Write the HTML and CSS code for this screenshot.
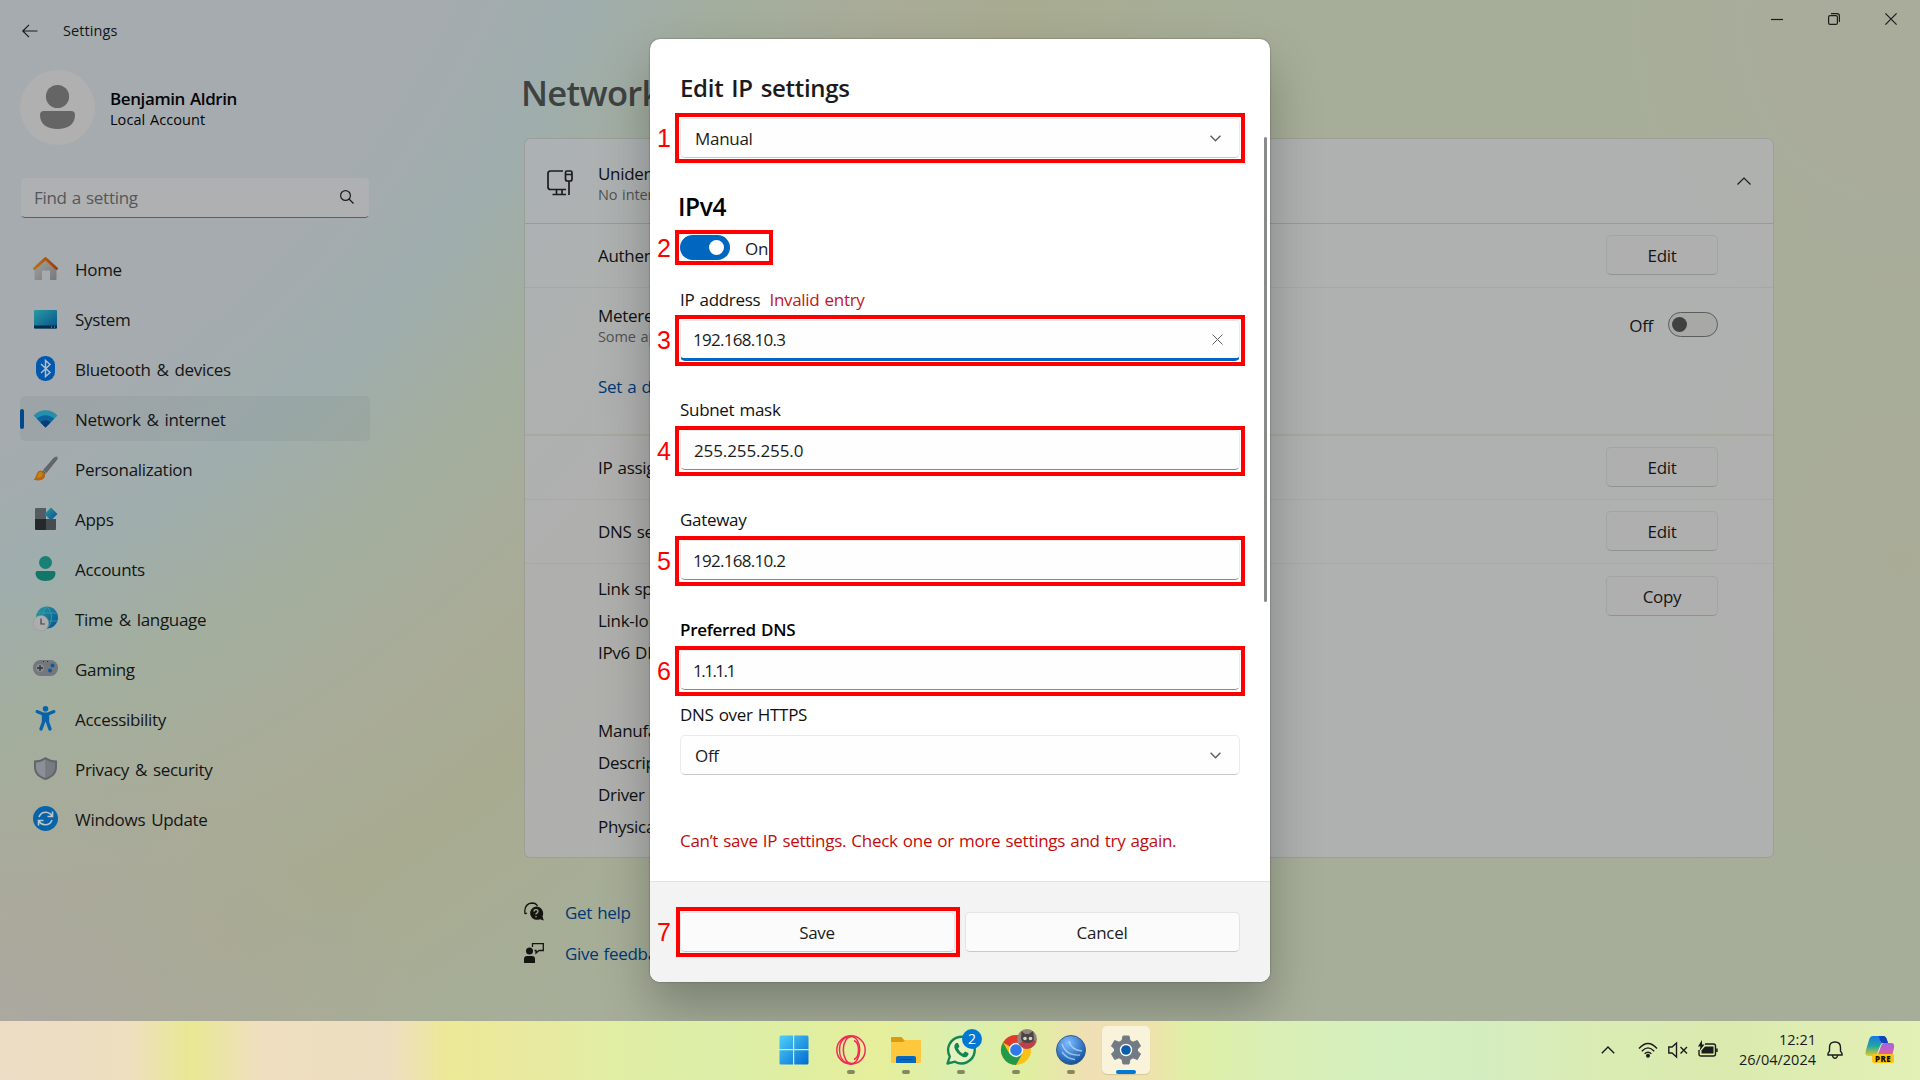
FILE: index.html
```html
<!DOCTYPE html>
<html lang="en">
<head>
<meta charset="utf-8">
<title>Settings</title>
<link rel="stylesheet" href="styles.css">
</head>
<body>
<div class="desktop">
  <div class="window">
    <header class="titlebar">
      <svg class="back" viewBox="0 0 16 14"><path d="M15.5 7H1M7 .8L.8 7 7 13.200"/></svg>
      <span class="app-name">Settings</span>
      <div class="controls">
        <svg viewBox="0 0 12 12"><path d="M0 6.500H12"/></svg>
        <svg viewBox="0 0 12 12"><rect x=".6" y="2.600" width="8.800" height="8.800" rx="1.500"/><path d="M3 .6H9Q11.400.6 11.400 3V9"/></svg>
        <svg viewBox="0 0 12 12"><path d="M.4.4L11.600 11.600M11.600.4L.4 11.600"/></svg>
      </div>
    </header>
    <div class="columns">
      <aside class="sidebar">
        <div class="account">
          <svg class="avatar" viewBox="0 0 75 75"><circle cx="37.500" cy="37.500" r="37.500" fill="#b0b0b0"/><circle cx="37.500" cy="26.500" r="11.600" fill="#656565"/><path d="M24 41H51Q55 41 55 45C55 54 48 59 37.500 59S20 54 20 45Q20 41 24 41Z" fill="#656565"/></svg>
          <div class="who"><span class="name">Benjamin Aldrin</span><span class="kind">Local Account</span></div>
        </div>
        <div class="search"><span>Find a setting</span><svg viewBox="0 0 14 14"><circle cx="5.500" cy="5.500" r="4.900"/><path d="M9 9L13.500 13.500"/></svg></div>
        <nav class="nav">
          <div class="item"><svg viewBox="0 0 25 25"><defs><linearGradient id="roof"><stop stop-color="#b77412"/><stop offset="1" stop-color="#a13b0b"/></linearGradient><linearGradient id="wall" x2="1" y2="1"><stop stop-color="#a2a2a2"/><stop offset="1" stop-color="#787878"/></linearGradient></defs><path d="M1.500 11L12.500 2 23.500 11V23Q23.500 24 22.500 24H17V14.500H9V24H2.500Q1.500 24 1.500 23Z" fill="url(#wall)"/><path d="M1.500 12.500L12.500 2.500 23.500 12.500" fill="none" stroke="url(#roof)" stroke-width="3" stroke-linecap="round" stroke-linejoin="round"/></svg><span>Home</span></div>
          <div class="item"><svg viewBox="0 0 25 25"><defs><linearGradient id="screen" x2="1" y2="1"><stop stop-color="#299ba1"/><stop offset="1" stop-color="#07508d"/></linearGradient></defs><rect x="1" y="4" width="23" height="18.500" rx="1" fill="url(#screen)"/><path d="M1 19.500H24V21.500Q24 22.500 23 22.500H2Q1 22.500 1 21.500Z" fill="#062b49"/><path d="M18 21H19M21 21H22" stroke="#8ba4b5"/></svg><span>System</span></div>
          <div class="item"><svg viewBox="0 0 25 25"><rect x="3" y="0" width="19" height="25" rx="9" fill="#0058af"/><path d="M8 8L17 16.500 12.500 20.500V4.500L17 8.500 8 17" fill="none" stroke="#b4bdc6" stroke-width="1.500"/></svg><span>Bluetooth &amp; devices</span></div>
          <div class="item selected"><svg viewBox="0 0 25 25"><path d="M.5 9.500C7 2.500 18 2.500 24.500 9.500L12.500 21.500Z" fill="#268fae"/><path d="M3.800 12.800C9 8 16 8 21.200 12.800L12.500 21.500Z" fill="#0b649e"/><path d="M7.500 16.500C10.500 13.500 14.500 13.500 17.500 16.500L12.500 21.500Z" fill="#0b3a71"/></svg><span>Network &amp; internet</span></div>
          <div class="item"><svg viewBox="0 0 25 25"><path d="M10 14L20.500 2Q23-.5 24.500 1 25.500 2.500 23.500 4.500L13.500 17Z" fill="#62666b"/><path d="M10 14.500L13 17.500 12 18 9 15.500Z" fill="#454b50"/><path d="M8 14.500Q12.500 16 12 20C11.500 24 6 25.500.5 23.500 4 22 2.500 14.500 8 14.500Z" fill="#b8640d"/><path d="M7 16Q10 16 9.500 19T4 22Q5 16 7 16Z" fill="#bd851c"/></svg><span>Personalization</span></div>
          <div class="item"><svg viewBox="0 0 25 25"><path d="M3 2H13V13H2V3Q2 2 3 2Z" fill="#565b61"/><path d="M2 13H13V24H3Q2 24 2 23Z" fill="#25292c"/><path d="M13 13H23V23Q23 24 22 24H13Z" fill="#464b50"/><path d="M18 1.500L24.500 8 18 14.500 11.500 8Z" fill="url(#screen)"/></svg><span>Apps</span></div>
          <div class="item"><svg viewBox="0 0 25 25"><circle cx="12.500" cy="6.500" r="6.500" fill="#168174"/><path d="M4.500 15H20.500Q22.500 15 22.500 17C22.500 22 18.500 25 12.500 25S2.500 22 2.500 17Q2.500 15 4.500 15Z" fill="#127768"/></svg><span>Accounts</span></div>
          <div class="item"><svg viewBox="0 0 25 25"><circle cx="14" cy="11.500" r="11" fill="url(#screen)"/><path d="M14 .5C8 7 8 16 14 22.500M14 .5C20 7 20 16 14 22.500M4 7H24M4 15H24" fill="none" stroke="#37a0b0" stroke-width=".8"/><circle cx="8" cy="17.200" r="7.700" fill="#acadae" stroke="#929699" stroke-width=".5"/><path d="M8 12.500V18H12" fill="none" stroke="#404448" stroke-width="1.200"/></svg><span>Time &amp; language</span></div>
          <div class="item"><svg viewBox="0 0 25 25"><rect x="0" y="4" width="25" height="16" rx="7.500" fill="#74787e"/><circle cx="7" cy="12" r="4" fill="#898d91"/><path d="M4 12H10M7 9V15" stroke="#2e3337" stroke-width="1.300"/><circle cx="19.500" cy="9.500" r="2" fill="#075ca2"/><circle cx="17" cy="14.500" r="2" fill="#075ca2"/><path d="M10 5.500H11M14 5.500H15" stroke="#2e3337"/></svg><span>Gaming</span></div>
          <div class="item"><svg viewBox="0 0 25 25"><circle cx="12.500" cy="2.800" r="2.800" fill="#0863a7"/><path d="M4 5.500L10 8H15L21 5.500" fill="none" stroke="#0863a7" stroke-width="3" stroke-linecap="round" stroke-linejoin="round"/><path d="M10.500 9V16L8 23M14.500 9V16L17 23" fill="none" stroke="#0863a7" stroke-width="3.400" stroke-linecap="round" stroke-linejoin="round"/><path d="M9 7.500H16V16H9Z" fill="#0863a7"/></svg><span>Accessibility</span></div>
          <div class="item"><svg viewBox="0 0 25 25"><path d="M12.500 1Q17.500 4.500 24 4.500V11C24 18 19 22 12.500 24 6 22 1 18 1 11V4.500Q7.500 4.500 12.500 1Z" fill="#60666b"/><path d="M12.500 3.500Q17 6.500 22 6.500V11C22 17 18 20 12.500 22Z" fill="#777c81"/><path d="M12.500 3.500Q8 6.500 3 6.500V11C3 17 7 20 12.500 22Z" fill="#8b9095"/></svg><span>Privacy &amp; security</span></div>
          <div class="item"><svg viewBox="0 0 25 25"><circle cx="12.500" cy="12.500" r="12.500" fill="#0864a6"/><path d="M6 11Q8 6 13 6.200 17 6.500 19 10M19.500 5.500V10.500H14.500M19 14Q17 19 12 18.800 8 18.500 6 15M5.500 19.500V14.500H10.500" fill="none" stroke="#bac6ce" stroke-width="1.600"/></svg><span>Windows Update</span></div>
        </nav>
      </aside>
      <main class="content">
        <h1>Network</h1>
        <section class="card">
          <div class="row head">
            <svg class="device" viewBox="0 0 26 26"><path d="M16 1H3.500Q1 1 1 3.500V17Q1 19.500 3.500 19.500H19M9.500 20V24.500M15 20V24.500M5.500 24.500H19M22 11V25M18.500 2.500Q18.500 1 20 1H23.500Q25 1 25 2.500V9Q25 11 23 11H20.500Q18.500 11 18.500 9ZM18.500 4.500H25"/></svg>
            <div class="label"><span>Uniden</span><small>No inter</small></div>
            <svg class="up" viewBox="0 0 14 8"><path d="M.5 7.500L7 1 13.500 7.500"/></svg>
          </div>
          <div class="row auth"><div class="label"><span>Authen</span></div><div class="btn">Edit</div></div>
          <div class="row metered"><div class="label"><span>Metere</span><small>Some ap</small><span class="link">Set a d</span></div><div class="switch"><span>Off</span><i></i></div></div>
          <div class="row short"><div class="label"><span>IP assig</span></div><div class="btn">Edit</div></div>
          <div class="row short"><div class="label"><span>DNS se</span></div><div class="btn">Edit</div></div>
          <div class="row details"><div class="label"><span>Link sp</span><span>Link-lo</span><span>IPv6 DN</span><span class="gap">Manufa</span><span>Descrip</span><span>Driver v</span><span>Physica</span></div><div class="btn">Copy</div></div>
        </section>
        <div class="help">
          <div><svg viewBox="0 0 20 20"><path d="M1 12L.8 8.500Q1.500 1.500 8 1 12 1 13.500 4M1 12L3 11" fill="none" stroke="#141511" stroke-width="1.300"/><path d="M12 4.500A7 6.700 0 1 0 16 17.200L19.800 18.500 18.500 14.500A7 7 0 0 0 12 4.500Z" fill="#141511"/><path d="M10 9.500Q10 7.700 12 7.700T14 9.500Q14 10.500 12 11.800V12.500M12 14V15.300" fill="none" stroke="#a6a88e" stroke-width="1.300"/></svg><span>Get help</span></div>
          <div><svg viewBox="0 0 20 20"><circle cx="5.500" cy="8" r="3.500" fill="#141511"/><path d="M0 20V16Q0 13 3 13H8Q11 13 11 16V20Z" fill="#141511"/><path d="M8.500 4V.700H19.300V7.500H15L12 10V7.500H10.500" fill="none" stroke="#141511" stroke-width="1.300"/></svg><span>Give feedba</span></div>
        </div>
      </main>
    </div>
  </div>

  <div class="dialog">
    <div class="body">
      <h2>Edit IP settings</h2>
      <div class="combo first"><span>Manual</span><svg class="down" viewBox="0 0 11 7"><path d="M.6.8L5.500 5.800 10.400.8"/></svg><b class="mark"></b><em class="step">1</em></div>
      <h3>IPv4</h3>
      <div class="toggle"><i></i><span>On</span><b class="mark"></b><em class="step">2</em></div>
      <label class="ip">IP address <span class="invalid">Invalid entry</span></label>
      <div class="input focus"><span class="host">192.168.10.3</span><svg class="clear" viewBox="0 0 11 11"><path d="M.5.500L10.500 10.500M10.500.500L.5 10.500"/></svg><b class="mark"></b><em class="step">3</em></div>
      <label>Subnet mask</label>
      <div class="input"><span class="netmask">255.255.255.0</span><b class="mark"></b><em class="step">4</em></div>
      <label>Gateway</label>
      <div class="input"><span class="host">192.168.10.2</span><b class="mark"></b><em class="step">5</em></div>
      <label class="strong">Preferred DNS</label>
      <div class="input"><span class="dns">1.1.1.1</span><b class="mark"></b><em class="step">6</em></div>
      <label class="doh">DNS over HTTPS</label>
      <div class="combo"><span>Off</span><svg class="down" viewBox="0 0 11 7"><path d="M.6.8L5.500 5.800 10.400.8"/></svg></div>
      <p class="error">Can’t save IP settings. Check one or more settings and try again.</p>
      <div class="scrollbar"></div>
    </div>
    <footer class="actions">
      <div class="action">Save<b class="mark"></b><em class="step">7</em></div>
      <div class="action">Cancel</div>
    </footer>
  </div>

  <div class="taskbar">
    <div class="apps">
      <div class="app start"><svg viewBox="0 0 30 30"><defs><linearGradient id="win" gradientUnits="userSpaceOnUse" x1="0" y1="0" x2="30" y2="30"><stop stop-color="#50d2fb"/><stop offset="1" stop-color="#0068d1"/></linearGradient></defs><path d="M2 .5H14V14H.5V2Q.5.500 2 .5ZM15.200.5H28Q29.500.500 29.500 2V14H15.200ZM.5 15.200H14V29.500H2Q.5 29.500.5 28ZM15.200 15.200H29.500V28Q29.500 29.500 28 29.500H15.200Z" fill="url(#win)"/></svg></div>
      <div class="app run"><svg viewBox="0 0 30 30" fill="none" stroke="#f12b57"><circle cx="15" cy="15" r="14.200" stroke-width="1.500"/><ellipse cx="15.500" cy="15" rx="8.200" ry="13.500" stroke-width="1.500"/><path d="M15 1.500C5 2 3.500 9 3.500 15S6 28 15 28.500M18 5.500C24 8 24 22 18 24.500" stroke-width="1.500"/></svg></div>
      <div class="app run"><svg viewBox="0 0 30 30"><path d="M0 3Q0 2 1 2H10.500L13 5H17V12H0Z" fill="#dc9a0c"/><path d="M0 7H12L14 5H29Q30 5 30 6V27Q30 28 29 28H1Q0 28 0 27Z" fill="#ffc83c"/><path d="M5 28V23Q5 21 7 21H23Q25 21 25 23V28Z" fill="#0869bf"/><path d="M9 24.500H21" stroke="#064a8f"/></svg></div>
      <div class="app run"><svg viewBox="0 0 30 30"><path d="M1.500 28.500L3.800 21.500A13.300 13.300 0 1 1 9 26.700Z" fill="#e6f1c0" stroke="#168554" stroke-width="2.400" stroke-linejoin="round"/><path d="M10 8Q8 9.500 8.300 12.500 10 18.500 17 22 21 23 22.500 19.500L22.300 18 19 16.500 17 18.700Q13.500 17 12 13.500L13.500 11.500 12 8Z" fill="#168554"/></svg><span class="badge">2</span></div>
      <div class="app run"><svg viewBox="0 0 30 30"><circle cx="15" cy="15" r="15" fill="#fbc116"/><path d="M15 15L2 7.500A15 15 0 0 1 28 7.500Z" fill="#df3a2d"/><path d="M2 7.500A15 15 0 0 0 15 30L21.500 18.500 8.500 18.800Z" fill="#249a48"/><circle cx="15" cy="15" r="7.200" fill="#f4f7ef"/><circle cx="15" cy="15" r="5.800" fill="#2f79e9"/></svg><svg class="profile" viewBox="0 0 20 20"><circle cx="10" cy="10" r="10" fill="#92847f"/><path d="M2 15Q10 8 19 12A10 10 0 0 1 7 19.500Z" fill="#c03d4a"/><path d="M4 10L4.500 2 8 5H12L16 2 17 10Q16 14 10.500 14T4 10Z" fill="#4a4445"/><circle cx="8" cy="9.500" r="1.800" fill="#d8d2c7"/><circle cx="13.500" cy="9.500" r="1.800" fill="#d8d2c7"/></svg></div>
      <div class="app run"><svg viewBox="0 0 30 30"><defs><radialGradient id="ball" cx=".4" cy=".25" r=".8"><stop stop-color="#81bdff"/><stop offset=".6" stop-color="#3579cb"/><stop offset="1" stop-color="#124887"/></radialGradient></defs><circle cx="15" cy="15" r="14.500" fill="url(#ball)" stroke="#32618f"/><path d="M6 9Q10 21 24 20M13 6Q15 15 26 16M6 17Q11 24 19 24.500" fill="none" stroke="#c5e0f6" stroke-width="1.300" stroke-opacity=".7"/></svg></div>
      <div class="app active"><svg viewBox="0 0 30 30"><path d="M12 1H18L19 5.500 22 7.200 26.300 5.500 29.500 11 26.500 14V16L29.500 19 26.300 24.500 22 22.800 19 24.500 18 29H12L11 24.500 8 22.800 3.700 24.500.5 19 3.500 16V14L.5 11 3.700 5.500 8 7.200 11 5.500Z" fill="#727b83" stroke="#727b83" stroke-linejoin="round"/><circle cx="15" cy="15" r="6.200" fill="#fff"/><circle cx="15" cy="15" r="4.800" fill="#075da8"/></svg></div>
    </div>
    <div class="tray">
      <svg class="t-up" viewBox="0 0 14 8"><path d="M.8 7.200L7 1 13.200 7.200"/></svg>
      <svg class="t-wifi" viewBox="0 0 20 16"><path d="M1 6.500Q10-3.500 19 6.500M3.800 9.200Q10 2.500 16.200 9.200M6.600 11.800Q10 8.500 13.400 11.800"/><circle cx="10" cy="13.700" r="1.300" fill="#1b1b1b"/></svg>
      <svg class="t-vol" viewBox="0 0 20 16"><path d="M.8 5H4L8.500 1V15L4 11H.8ZM12.500 5L19 11.500M19 5L12.500 11.500"/></svg>
      <svg class="t-bat" viewBox="0 0 20 18"><path d="M7 4H15.500Q17.500 4 17.500 6V14Q17.500 16 15.500 16H3Q1 16 1 14V10M19 8.500V12"/><path d="M7 6.500H15.500V13.500H3.500V10.500Z" fill="#1b1b1b" stroke="none"/><path d="M4 0L0 6.500H2.500L1.500 11 6.500 4.500H4Z" fill="#1b1b1b" stroke="none"/></svg>
      <div class="clock"><span>12:21</span><span>26/04/2024</span></div>
      <svg class="t-bell" viewBox="0 0 16 18"><path d="M1 14V12.500L2.500 10V6.500Q2.500 1 8 1T13.500 6.500V10L15 12.500V14ZM5.500 14.500Q6 17.300 8 17.300T10.500 14.500"/></svg>
      <div class="copilot"><svg viewBox="0 0 30 30"><defs><linearGradient id="cpa" x2="0" y2="1"><stop stop-color="#1676e8"/><stop offset=".5" stop-color="#20a6a0"/><stop offset="1" stop-color="#e5cb26"/></linearGradient><linearGradient id="cpb" x2="0" y2="1"><stop stop-color="#9b65ef"/><stop offset="1" stop-color="#f25c86"/></linearGradient></defs><path d="M8 1H18Q21 1 22 5L23 8H18Q16 8 15 11L12 19Q11 21 8 21H4Q-1 21 1 15L4 5Q5 1 8 1Z" fill="url(#cpa)"/><path d="M14 1H18Q21 1 22 5L23 8H18Q16 8 14.500 4Z" fill="#1640bd"/><path d="M19 8H26Q30 8 29 13L27 21H11Q13 20 14 17L16 11Q17 8 19 8Z" fill="url(#cpb)"/></svg><span>PRE</span></div>
    </div>
  </div>
</div>
</body>
</html>
```
FILE: styles.css
```css
* { box-sizing: border-box; }
body { margin: 0; font-family: "Open Sans", "Noto Sans", sans-serif; font-size: 17px; letter-spacing: -.3px; word-spacing: 1px; color: #141515; }
h1, h2, h3, p { margin: 0; font-weight: 600; }
svg { display: block; flex: none; overflow: visible; }
span, label, p { white-space: nowrap; }

.desktop { position: relative; width: 1920px; height: 1080px; overflow: hidden; display: flex; flex-direction: column; }

.window {
  height: 1021px; flex: none; overflow: hidden;
  background:
    radial-gradient(circle at 1920px 30px, #aaac9b 0, #aaac9b 110px, rgba(170,172,155,0) 320px),
    radial-gradient(ellipse 420px 260px at 0 1021px, #aba8a0 0, rgba(171,168,160,0) 100%),
    radial-gradient(ellipse 300px 420px at 1900px 560px, #a9ab97 0, rgba(169,171,151,0) 100%),
    radial-gradient(circle at -400px -400px, #a5abb0 0, #a5abaf 940px, #9fadad 1060px, #a3ae9e 1190px, #a9ab96 1370px, #a8ab90 1480px, #a6ae99 1700px, #a6ae9a 2400px);
}
.titlebar { display: flex; align-items: flex-start; height: 62px; padding: 13px 23px 0 22px; }
.titlebar svg, .search svg, .up, .device { fill: none; stroke: #1b1c1c; stroke-width: 1.2; }
.back { width: 16px; height: 14px; margin-top: 11px; }
.app-name { margin-left: 25px; line-height: 35px; font-size: 14.5px; letter-spacing: .1px; }
.controls { margin-left: auto; display: flex; gap: 45px; }
.controls svg { width: 12px; height: 12px; }
.columns { display: flex; }

.sidebar { width: 370px; padding: 8px 0 0 20px; }
.account { display: flex; align-items: center; height: 75px; }
.avatar { width: 75px; height: 75px; }
.who { display: flex; flex-direction: column; margin: 2px 0 0 15px; color: #050505; }
.name { font-weight: 600; line-height: 22px; letter-spacing: -.4px; }
.kind { font-size: 14.5px; line-height: 20px; letter-spacing: .05px; }
.search { display: flex; align-items: center; justify-content: space-between; height: 41px; margin-top: 32px; padding: 0 15px 0 13px; background: #afb0b2; border: 1px solid #a2abae; border-bottom: 1px solid #5c5e60; border-radius: 5px; color: #54575a; }
.search svg { width: 14px; height: 14px; margin-top: -2px; }
.nav { display: flex; flex-direction: column; gap: 5px; margin-top: 28px; word-spacing: 1.8px; }
.item { display: flex; align-items: center; height: 45px; padding-left: 13px; border-radius: 5px; }
.item svg { width: 25px; height: 25px; margin-right: 17px; }
.item span { margin-top: 2px; }
.selected { background: rgba(120,130,130,.16); position: relative; }
.selected::before { content: ""; position: absolute; left: 0; top: 13px; width: 4px; height: 20px; border-radius: 2px; background: #00498e; }

.content { width: 1250px; margin-left: 154px; }
h1 { width: 129px; overflow: hidden; white-space: nowrap; font-size: 34.5px; line-height: 48px; letter-spacing: -.7px; margin: 7px 0 21px -3px; color: #3e4341; }
.card { height: 720px; border: 1px solid rgba(120,130,100,.35); border-radius: 6px; background: rgba(179,178,185,.68); overflow: hidden; }
.row { display: flex; align-items: flex-start; padding: 0 55px 0 73px; border-bottom: 1px solid rgba(158,160,118,.4); }
.row .label { display: flex; flex-direction: column; width: 53px; overflow: hidden; line-height: 32px; color: #101111; }
.row small { font-size: 14.5px; line-height: 20px; letter-spacing: -.1px; color: #505352; white-space: nowrap; }
.row .btn { margin-left: auto; }
.btn { width: 112px; height: 40px; line-height: 39px; text-align: center; background: #b0afb0; border: 1px solid #a3a4a2; border-bottom-color: #90928f; border-radius: 5px; }
.head { height: 85px; padding: 24px 22px 0 22px; border-color: rgba(130,135,110,.5); }
.head .label { line-height: 22px; margin-left: 25px; }
.device { width: 26px; height: 26px; margin-top: 7px; stroke-width: 1.7; }
.up { width: 14px; height: 8px; margin: 14px 0 0 auto; }
.auth { height: 64px; padding-top: 11px; }
.auth .label { line-height: 42px; }
.short .label { line-height: 42px; }
.metered { height: 148px; padding-top: 17px; border-bottom-width: 2px; }
.metered .label { line-height: 22px; }
.metered .link { margin-top: 29px; }
.link, .help span { color: #003874; }
.switch { display: flex; align-items: center; gap: 15px; margin-left: auto; margin-top: 7px; height: 25px; }
.switch span { margin-top: 1px; }
.switch i { width: 50px; height: 25px; border: 1.500px solid #5b5d5b; border-radius: 13px; background: #a8a9a7; display: flex; align-items: center; padding-left: 3px; }
.switch i::before { content: ""; width: 15px; height: 15px; border-radius: 50%; background: #404140; }
.short { height: 64px; padding-top: 11px; }
.details { padding-top: 12px; border-bottom: 0; }
.details .label { margin-top: -3px; }
.details .gap { margin-top: 46px; }
.help { display: flex; flex-direction: column; gap: 17px; margin-top: 42px; width: 126px; overflow: hidden; }
.help div { display: flex; align-items: center; gap: 21px; height: 24px; }
.help svg { width: 20px; height: 20px; }

.dialog { position: absolute; left: 650px; top: 39px; width: 620px; height: 943px; background: #fff; border-radius: 10px; overflow: hidden; display: flex; flex-direction: column; color: #1b1b1b; }
.dialog { box-shadow: 0 0 2px rgba(0,0,0,.4), 0 26px 50px rgba(0,0,0,.26); }
.body { position: relative; height: 842px; padding: 32px 30px 0; display: flex; flex-direction: column; }
h2 { font-size: 24px; line-height: 34px; letter-spacing: -.3px; word-spacing: 2px; }
h3 { font-size: 24.5px; line-height: 34px; letter-spacing: -.4px; margin: 32px 0 0 -2px; color: #000; }
.combo, .input { position: relative; flex: none; display: flex; align-items: center; height: 40px; margin-top: 8px; padding: 0 18px 0 14px; border: 1px solid #ebebeb; border-bottom-color: #c9c9c9; border-radius: 5px; background: #fefefe; }
.combo.first { margin-top: 13px; }
.combo svg, .input svg { margin-left: auto; fill: none; stroke: #5d5d5d; stroke-width: 1.400; }
.combo span { line-height: 40px; margin-top: 2px; }
.down { width: 11px; height: 7px; }
.clear { width: 11px; height: 11px; stroke-width: 1px !important; }
.input { padding: 0 16px 0 12px; border-bottom-color: #868686; }
.host { letter-spacing: -.72px; }
.netmask { letter-spacing: -.1px; margin-left: 1px; }
.dns { letter-spacing: -1.5px; }
.focus { height: 41px; margin-bottom: -1px; border-bottom: 3px solid #0067c0; }
label { line-height: 24px; margin-top: 38px; color: #111; flex: none; }
label.ip { margin-top: 28px; }
label.doh { margin-top: 13px; }
.invalid { color: #c4151c; margin-left: 4px; }
.strong { font-weight: 600; color: #000; }
.error { line-height: 24px; margin-top: 54px; color: #c40b0b; font-weight: 400; letter-spacing: -.28px; }
.toggle { position: relative; display: flex; align-items: center; width: 93px; height: 25px; margin-top: 11px; }
.toggle i { width: 50px; height: 25px; border-radius: 13px; background: #0067c0; display: flex; align-items: center; justify-content: flex-end; padding-right: 6px; margin-right: 15px; }
.toggle i::before { content: ""; width: 15px; height: 15px; border-radius: 50%; background: #fff; }
.toggle span { margin-top: 1px; }

/* Numbered step outlines laid over the controls */
.mark { position: absolute; inset: -6px; border: 4px solid #f00; }
.step { position: absolute; left: -24px; top: 50%; transform: translateY(-50%); font: normal 25px/30px "Liberation Sans", sans-serif; letter-spacing: 0; color: #f00; }
.input .mark { inset: -5px -6px -7px; }
.input .step { margin-top: 1px; }
.toggle .mark { inset: -5px 0 -5px -5px; }
.toggle .step { left: -23px; }
.focus .mark { inset: -6px -6px -8px; }
.focus .step { margin-top: 0; }
.scrollbar { position: absolute; right: 3px; top: 98px; width: 3px; height: 465px; border-radius: 2px; background: #8a8a8a; }

.actions { flex: 1; display: flex; gap: 10px; padding: 30px 30px 0; background: #f3f3f3; border-top: 1px solid #e2e2e2; }
.action { position: relative; flex: 1; height: 40px; line-height: 40px; padding-right: 1px; text-align: center; background: #fbfbfb; border: 1px solid #e4e4e4; border-bottom-color: #c8c8c8; border-radius: 5px; }
.action .mark { inset: -6px -6px -6px -5px; }

.taskbar {
  position: relative; height: 59px; display: flex; justify-content: flex-end;
  background: linear-gradient(90deg, #ecdcc5 0, #eedfbf 130px, #e9e893 190px, #efdfc0 260px, #eedec1 390px, #ece996 450px, #e9e9a0 530px, #e0eea4 620px, #dceea8 720px, #dfeea0 800px, #e6ef9b 880px, #daefb0 960px, #e0eea0 1030px, #f0dfb5 1090px, #eee3ac 1150px, #dfefa5 1190px, #dbefb4 1260px, #d5f0bd 1370px, #d4edc0 1480px, #dbecb3 1600px, #daeaaf 1720px, #e3f0b6 1920px);
}
.apps { position: absolute; left: 771px; top: 5px; display: flex; gap: 7px; }
.app { position: relative; width: 48px; height: 48px; padding: 9px; border-radius: 5px; }
.app svg { width: 30px; height: 30px; }
.start { padding-left: 8px; width: 49px; }
.run::after, .active::after { content: ""; position: absolute; left: 20px; top: 44px; width: 8px; height: 4px; border-radius: 2px; background: #84875f; }
.active { background: #f9f3dc; box-shadow: 0 1px 1px rgba(0,0,0,.12); }
.active::after { left: 14px; width: 20px; background: #0078d4; }
.badge { position: absolute; left: 25px; top: 3px; width: 20px; height: 20px; border-radius: 50%; background: #0078d4; color: #fff; font-size: 14px; line-height: 20px; text-align: center; letter-spacing: 0; }
.app .profile { position: absolute; left: 25px; top: 3px; width: 20px; height: 20px; }
.tray { display: flex; align-items: center; padding: 0 25px 2px 0; }
.tray > svg { fill: none; stroke: #1b1b1b; stroke-width: 1.400; }
.t-up { width: 14px; height: 8px; }
.t-wifi { width: 20px; height: 16px; margin-left: 23px; }
.t-vol { width: 20px; height: 16px; margin-left: 10px; }
.t-bat { width: 20px; height: 18px; margin: 0 0 2px 10px; }
.clock { display: flex; flex-direction: column; align-items: flex-end; width: 98px; font-size: 14.5px; line-height: 20px; letter-spacing: 0; color: #1b1b1b; }
.t-bell { width: 16px; height: 18px; margin-left: 11px; }
.copilot { position: relative; width: 30px; height: 30px; margin-left: 22px; }
.copilot span { position: absolute; left: 7px; top: 19px; width: 22px; height: 9px; border-radius: 2px; background: #fcc312; color: #141200; font-size: 8px; line-height: 9px; font-weight: 800; text-align: center; letter-spacing: .4px; }
```
